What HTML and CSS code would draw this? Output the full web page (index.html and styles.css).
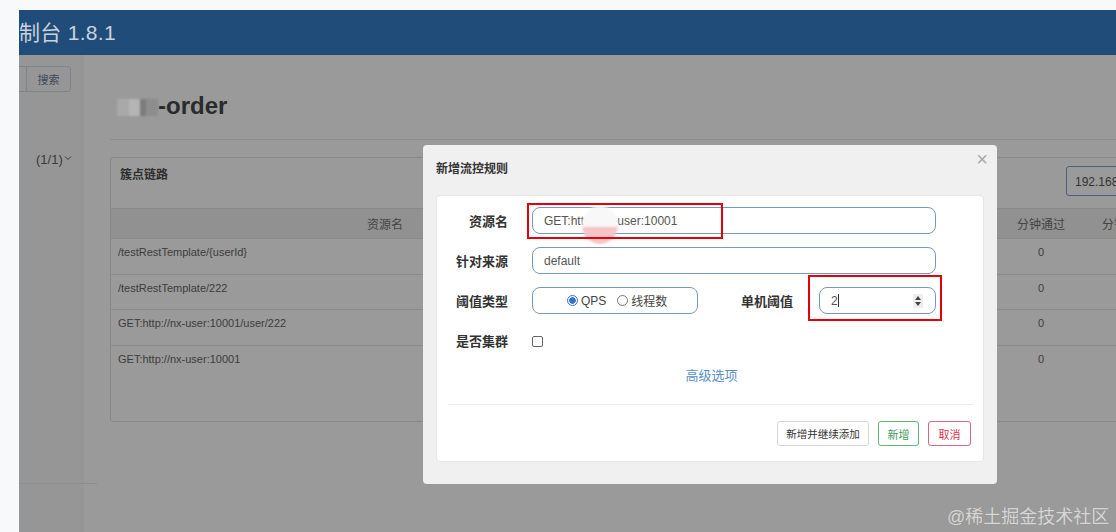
FILE: index.html
```html
<!DOCTYPE html>
<html lang="zh-CN">
<head>
<meta charset="utf-8">
<title>Sentinel 控制台</title>
<link rel="stylesheet" href="styles.css">
</head>
<body>
<div class="page">
  <header class="topbar"><span class="brand">制台 1.8.1</span></header>
  <div class="layout">
    <aside class="sidebar">
      <div class="search"><span class="search-input"></span><span class="search-btn">搜索</span></div>
      <div class="app-item">(1/1)<svg class="chev" width="8" height="6" viewBox="0 0 8 6"><path d="M1 1.5 L4 4.5 L7 1.5" fill="none" stroke="#3a3a3a" stroke-width="1"/></svg></div>
      <div class="side-line"></div>
    </aside>
    <main class="main">
      <h1 class="title"><span class="blurred"></span>-order</h1>
      <div class="rule"></div>
      <section class="panel">
        <div class="panel-head">
          <span class="panel-title">簇点链路</span>
          <span class="ip">192.168.</span>
        </div>
        <div class="table">
          <div class="tr th"><span class="c1">资源名</span><span class="c2"></span><span class="c3">分钟通过</span><span class="c4">分钟拒绝</span></div>
          <div class="tr"><span class="c1">/testRestTemplate/{userId}</span><span class="c2"></span><span class="c3">0</span><span class="c4">0</span></div>
          <div class="tr"><span class="c1">/testRestTemplate/222</span><span class="c2"></span><span class="c3">0</span><span class="c4">0</span></div>
          <div class="tr"><span class="c1">GET:http://nx-user:10001/user/222</span><span class="c2"></span><span class="c3">0</span><span class="c4">0</span></div>
          <div class="tr last"><span class="c1">GET:http://nx-user:10001</span><span class="c2"></span><span class="c3">0</span><span class="c4">0</span></div>
        </div>
      </section>
    </main>
  </div>

  <div class="modal">
    <div class="modal-head"><span class="modal-title">新增流控规则</span><span class="close">×</span></div>
    <div class="card">
      <div class="row"><label class="lbl">资源名</label><div class="input wide">GET:http://nx-user:10001</div></div>
      <div class="row"><label class="lbl">针对来源</label><div class="input wide">default</div></div>
      <div class="row">
        <label class="lbl">阈值类型</label>
        <div class="input radios">
          <span class="radio on"></span><span class="rtext">QPS</span>
          <span class="radio"></span><span class="rtext">线程数</span>
        </div>
        <label class="lbl2">单机阈值</label>
        <div class="input num"><span>2</span><span class="caret"></span><span class="spin"><svg width="8" height="12" viewBox="0 0 8 12"><path d="M4 1 L7 5 L1 5 Z M4 11 L7 7 L1 7 Z" fill="#444"/></svg></span></div>
      </div>
      <div class="row"><label class="lbl">是否集群</label><span class="check"></span></div>
      <div class="adv"><span>高级选项</span></div>
      <div class="sep"></div>
      <div class="actions">
        <span class="btn b1">新增并继续添加</span>
        <span class="btn green">新增</span>
        <span class="btn red">取消</span>
      </div>
    </div>
  </div>

  <div class="blob"></div>
  <div class="mark mark-a"></div>
  <div class="mark mark-b"></div>
  <div class="watermark">@稀土掘金技术社区</div>
</div>
</body>
</html>
```
FILE: styles.css
```css
* { box-sizing: border-box; }
html, body { margin: 0; padding: 0; }
body {
  width: 1116px; height: 532px; overflow: hidden;
  background: #f8f9fb;
  font-family: "Liberation Sans", "Noto Sans CJK SC", sans-serif;
  color: #3a3a3a;
}
.page {
  position: relative;
  margin: 10px 0 0 19px;
  height: 522px;
  display: flex; flex-direction: column;
  background: #9a9a9a;
}
.topbar {
  height: 45px; background: #1f4c79;
  display: flex; align-items: center;
}
.brand { font-size: 21px; color: #c9d2dd; letter-spacing: 0.3px; margin-top: -3px; }

.layout { flex: 1; display: flex; }
.sidebar {
  width: 65px; background: #969696;
  display: flex; flex-direction: column;
}
.search { display: flex; margin-top: 11px; height: 26px; }
.search-input { width: 8px; border: 1px solid #7b8591; border-left: none; }
.search-btn {
  width: 45px; border: 1px solid #7b8591;
  border-radius: 0 3px 3px 0; margin-left: -1px;
  font-size: 11px; color: #3f4a56; display: flex; align-items: center; justify-content: center;
}
.app-item { margin: 60px 0 0 17px; font-size: 13px; color: #3a3a3a; display: flex; align-items: center; gap: 1px; }
.chev { margin-top: -4px; }
.side-line { margin-top: 316px; width: 78px; height: 1px; background: #8e8e8e; }

.main { flex: 1; padding-left: 26px; display: flex; flex-direction: column; }
.title {
  margin: 36px 0 0 0; padding-left: 7px;
  font-size: 24px; line-height: 30px; font-weight: bold; color: #2b2b2b;
  display: flex; align-items: center;
}
.blurred {
  width: 41px; height: 17px; margin-top: 2px;
  background: linear-gradient(90deg, #a9a9a9 0 30%, #b5b5b5 30% 55%, #7c7c7c 55% 70%, #8d8d8d 70% 100%);
  filter: blur(1.2px);
}
.rule { margin-top: 18px; height: 1px; background: #8d8d8d; }
.panel {
  margin-top: 17px; width: 1100px; height: 265px; flex-shrink: 0;
  border: 1px solid #878787; border-radius: 3px;
}
.panel-head { height: 50px; display: flex; justify-content: space-between; align-items: flex-start; padding: 7px 0 0 9px; }
.panel-title { font-size: 12px; color: #2f2f2f; font-weight: bold; }
.ip {
  margin: 1px 63px 0 0; width: 80px; height: 30px;
  border: 1px solid #4c6179; border-radius: 3px;
  font-size: 12px; color: #333; padding: 8px 0 0 8px;
}
.tr { display: flex; height: 35.6px; align-items: flex-start; padding-top: 7px; border-top: 1px solid #8a8a8a; font-size: 11px; color: #3c3c3c; }
.tr.th { height: 30px; align-items: center; padding-top: 0; background: #919191; font-size: 12px; color: #444; }
.c1 { width: 548px; flex-shrink: 0; padding-left: 7px; }
.th .c1 { text-align: center; padding-left: 0; }
.c2 { width: 347px; flex-shrink: 0; }
.c3 { width: 70px; flex-shrink: 0; text-align: center; }
.c4 { width: 100px; flex-shrink: 0; text-align: center; }

/* modal */
.modal {
  position: absolute; left: 404px; top: 135px;
  width: 574px; height: 339px;
  background: #f0f0f0; border-radius: 4px;
  padding: 0 13px 22px 13px;
  display: flex; flex-direction: column;
}
.modal-head { height: 50px; display: flex; justify-content: space-between; align-items: center; padding-bottom: 6px; }
.modal-title { font-size: 12px; font-weight: bold; color: #333; }
.close { font-size: 20px; color: #a8a8a8; margin-right: -4px; margin-top: -16px; }
.card {
  flex: 1; background: #fff; border-radius: 4px; border: 1px solid #e6e6e6;
  padding: 11px 0 0 0;
  display: flex; flex-direction: column;
}
.row { display: flex; align-items: center; height: 27px; margin-bottom: 13px; }
.lbl { width: 71px; text-align: right; font-size: 13px; font-weight: bold; color: #333; margin-right: 24px; }
.lbl2 { font-size: 13px; font-weight: bold; color: #333; margin: 0 26px 0 43px; }
.input {
  height: 27px; border: 1px solid #7899bd; border-radius: 8px;
  font-size: 12px; color: #555; display: flex; align-items: center; padding-left: 11px;
}
.wide { width: 404px; }
.radios { width: 166px; padding-left: 34px; }
.radio { width: 11px; height: 11px; border-radius: 50%; border: 1px solid #777; margin-right: 3px; }
.radio.on { border-color: #2e72d2; background: radial-gradient(circle, #2e72d2 0 3px, #fff 3.5px); }
.rtext { margin-right: 11px; font-size: 12px; color: #444; }
.num { width: 117px; position: relative; }
.caret { width: 1px; height: 13px; background: #333; }
.spin { position: absolute; right: 12px; top: 6px; width: 10px; height: 14px; background: #eee; display: flex; align-items: center; justify-content: center; }
.check { width: 11px; height: 11px; border: 1px solid #666; border-radius: 2px; margin-top: 2px; }
.adv { text-align: center; margin-top: -2px; padding-left: 3px; font-size: 13px; color: #5a8fc7; height: 19px; }
.sep { margin: 20px 10px 0 11px; height: 1px; background: #ececec; }
.actions { display: flex; justify-content: flex-end; gap: 9px; padding-right: 12px; margin-top: 16px; }
.btn {
  height: 25px; border: 1px solid #d6d6d6; border-radius: 3px;
  font-size: 11px; color: #333; display: flex; align-items: center; justify-content: center;
}
.b1 { width: 92px; font-size: 10.5px; }
.btn.green { width: 41px; border-color: #5fb97c; color: #3f9b5f; }
.btn.red { width: 43px; border-color: #d8687d; color: #d8344f; }

.blob {
  position: absolute; left: 563px; top: 196px; width: 36px; height: 38px; border-radius: 50%;
  background: linear-gradient(180deg, #f8f8f8 0 55%, #f4c4c6 55% 100%);
  filter: blur(1px);
}
.mark { position: absolute; border: 2px solid #e3000b; }
.mark-a { left: 508px; top: 193px; width: 196px; height: 36px; }
.mark-b { left: 789px; top: 265px; width: 134px; height: 46px; }
.watermark {
  position: absolute; left: 928px; top: 492px;
  font-size: 18px; color: #d6d6d6;
  text-shadow: 0 0 1px #8a8a8a;
}
```
